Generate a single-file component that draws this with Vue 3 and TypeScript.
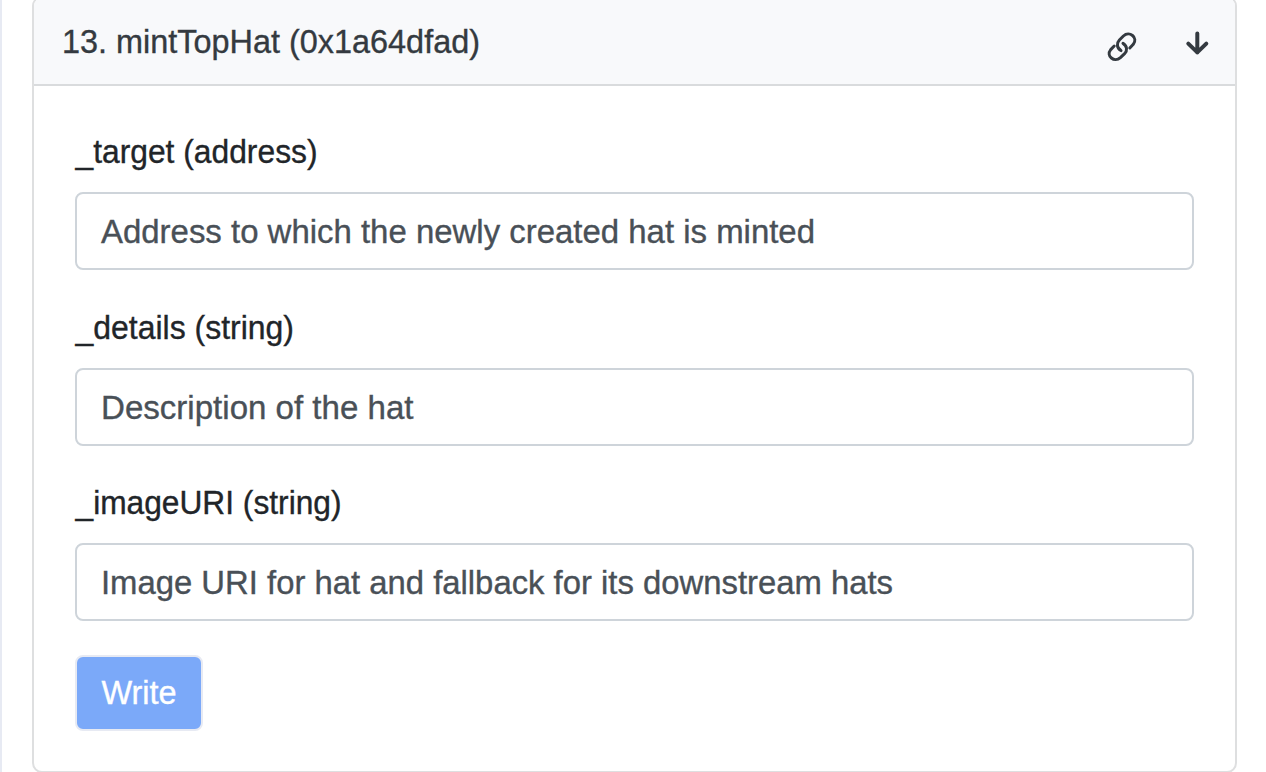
<script setup lang="ts">
interface Field { label: string; hint: string; labelWidth: number; hintWidth: number }
const fields: Field[] = [
  { label: '_target (address)', hint: 'Address to which the newly created hat is minted', labelWidth: 242, hintWidth: 714 },
  { label: '_details (string)', hint: 'Description of the hat', labelWidth: 218.5, hintWidth: 312.5 },
  { label: '_imageURI (string)', hint: 'Image URI for hat and fallback for its downstream hats', labelWidth: 266, hintWidth: 792 },
]
</script>

<template>
  <div class="page">
    <section class="card">
      <header class="head">
        <svg class="title" width="430" height="50"><text x="0" y="35.4" textLength="418" lengthAdjust="spacingAndGlyphs">13. mintTopHat (0x1a64dfad)</text></svg>
        <div class="actions">
          <svg class="link" width="30" height="30" viewBox="0 0 30 30">
            <g fill="none" stroke="#343a40" stroke-width="3" stroke-linecap="round" stroke-linejoin="round">
              <path d="M14 18.6C9.6 15.8 9.4 11.2 12.4 8L16.4 4C22.4 -1.5 31.4 5.5 26.3 12.3L22.8 16" />
              <path d="M16 11.4C20.2 14 20.6 18.6 17.6 21.6L13.4 25.6C7.4 31 -1.4 24 3.7 17.6L7.2 14" />
            </g>
          </svg>
          <svg class="arrow" width="24" height="26" viewBox="0 0 24 26">
            <path d="M12.3 3.6V22.4M3.3 13.6L12.3 22.4L21.3 13.6" fill="none" stroke="#343a40" stroke-width="4" stroke-linecap="round" stroke-linejoin="round" />
          </svg>
        </div>
      </header>
      <div class="body">
        <div v-for="f in fields" :key="f.label" class="field">
          <svg class="label" width="400" height="50"><text x="0.5" y="35.2" :textLength="f.labelWidth" lengthAdjust="spacingAndGlyphs">{{ f.label }}</text></svg>
          <div class="input">
            <svg width="1000" height="50"><text x="0" y="35" :textLength="f.hintWidth" lengthAdjust="spacingAndGlyphs">{{ f.hint }}</text></svg>
          </div>
        </div>
        <button class="write" disabled>Write</button>
      </div>
    </section>
  </div>
</template>

<style>
body { margin: 0; overflow: hidden; background: #fff; }
</style>
<style scoped>
* { box-sizing: border-box; }
.page { width: 1266px; height: 772px; overflow: hidden; padding-left: 30px; border-left: 2px solid #e7eaf3; font: 32.5px "Liberation Sans", Arial, sans-serif; }
.card { width: 1205px; height: 777px; margin-top: -4px; border: 2px solid #dedfe0; border-radius: 10px; overflow: hidden; }
.head { height: 88px; display: flex; justify-content: space-between; background: #f8f9fb; border-bottom: 2px solid #d9dbdd; padding: 20px 26px 0 28px; }
svg { display: block; flex: none; overflow: visible; }
text { stroke-width: 0.35px; }
.title text { fill: #343a40; stroke: #343a40; }
.label text { fill: #212529; stroke: #212529; }
.actions { display: flex; gap: 48px; padding-top: 14px; }
.arrow { margin-top: -2px; }
.body { padding: 42px 41px 0; }
.field { height: 175.5px; }
.input { height: 78px; margin-top: 14px; border: 2px solid #ced4da; border-radius: 8px; padding: 14px 24px; }
.input text { fill: #495057; stroke: #495057; }
.write { width: 128px; height: 76px; border: 2px solid #e7eaf3; border-radius: 8px; background: #7ba9f9; color: #fff; font: inherit; padding: 2px 0 0; -webkit-text-stroke: 0.35px #fff; }
</style>
